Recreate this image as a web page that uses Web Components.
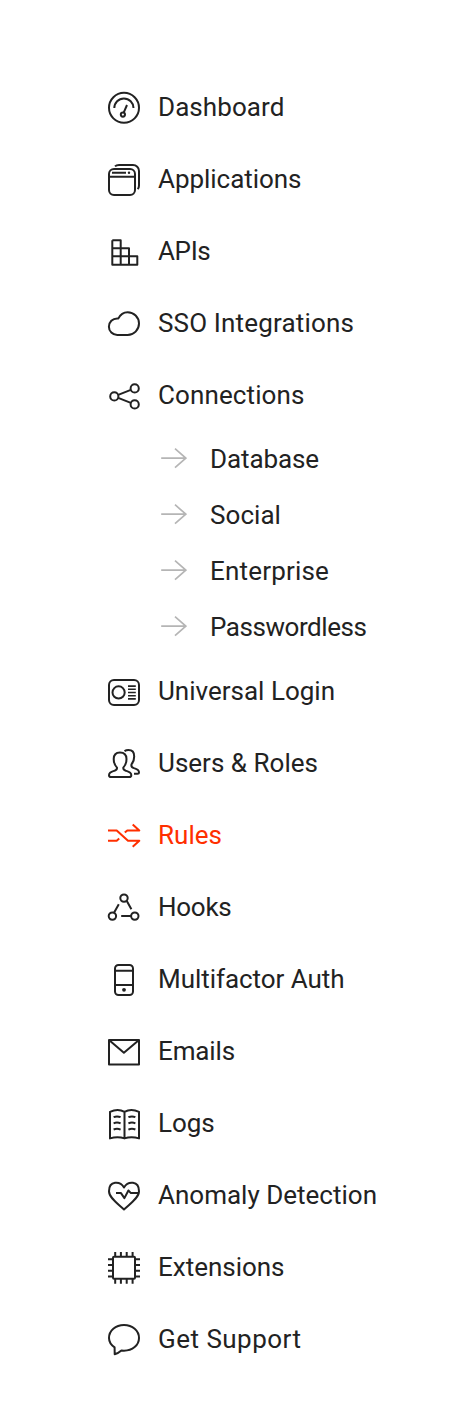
<!DOCTYPE html>
<html lang="en">
<head>
<meta charset="utf-8">
<title>Navigation</title>
<style>
html,body{margin:0;background:#fff}
body{font-family:Roboto,"Liberation Sans",sans-serif;font-size:26px;color:#222}
</style>
</head>
<body>
<side-nav>
<nav-item icon="dashboard" fit="126.500">Dashboard</nav-item>
<nav-item icon="apps" fit="143.5">Applications</nav-item>
<nav-item icon="apis" fit="52.4">APIs</nav-item>
<nav-item icon="cloud" fit="196">SSO Integrations</nav-item>
<nav-item icon="share" fit="146.5">Connections</nav-item>
<nav-sub fit="109">Database</nav-sub>
<nav-sub fit="71">Social</nav-sub>
<nav-sub fit="119">Enterprise</nav-sub>
<nav-sub fit="156.5">Passwordless</nav-sub>
<nav-item icon="login" fit="177">Universal Login</nav-item>
<nav-item icon="users" fit="160">Users &amp; Roles</nav-item>
<nav-item icon="rules" fit="64" active>Rules</nav-item>
<nav-item icon="hooks" fit="73.5">Hooks</nav-item>
<nav-item icon="phone" fit="186.5">Multifactor Auth</nav-item>
<nav-item icon="mail" fit="77">Emails</nav-item>
<nav-item icon="logs" fit="56.5">Logs</nav-item>
<nav-item icon="heart" fit="219">Anomaly Detection</nav-item>
<nav-item icon="chip" fit="126.500">Extensions</nav-item>
<nav-item icon="chat" fit="143.5">Get Support</nav-item>
</side-nav>
<script>
const dot = (x, y, r) => `<circle cx="${x}" cy="${y}" r="${r}" fill="currentColor" stroke="none"/>`;
const ICONS = {
  dashboard: `<circle cx="16" cy="15.8" r="15"/><path d="M6.3 16a9.6 9.6 0 0 1 19.2 0M15.8 20.4 19 13"/><circle cx="14.9" cy="22.6" r="2.1"/>`,
  apps: `<rect x="1" y="5" width="26" height="26" rx="5"/><path d="M1 12.8h26M4 8.8h14M7 2.4C8 1.4 9.3 1 11 1h14a6 6 0 0 1 6 6v14.5c0 1.6-.5 2.8-1.3 3.7"/>${dot(21, 8.8, 1.2)}`,
  apis: `<path d="M4.3 4.2h8.4v24.5M4.3 4.2v24.5h25v-8.4h-25M4.3 12.3H21v16.4"/>`,
  cloud: `<path d="M9.2 27a8.3 8.3 0 0 1 0-16.6h1.2C12.300 6.500 15.500 4.200 19.600 4.200a11.400 11.400 0 0 1 0 22.800Z"/>`,
  share: `<circle cx="6.3" cy="16.4" r="4.100"/><circle cx="26.7" cy="8.4" r="4.100"/><circle cx="26.7" cy="24.4" r="4.100"/><path d="m10.2 14.9 12.6-5M10.2 17.9l12.6 5"/>`,
  login: `<rect x="1" y="4" width="30" height="25" rx="5"/><circle cx="10.6" cy="16.4" r="6.1"/><path d="M20 10.1h7.8M20 13.3h7.8M20 16.5h7.8M20 19.7h7.8M20 22.9h7.8" stroke-width="1.6"/>`,
  users: `<path d="M12 4.4C8 4.4 5.7 7 5.7 11c0 3.6 1.2 6.4 3.3 8.6.2 1.6-.6 2.5-2.5 3.1C3.6 23.5 1 24 1 27.2 1 28.5 1.6 29 3 29h18.2c1.4 0 2.1-.5 2.1-1.8 0-3.2-2.6-3.7-5.5-4.5-1.9-.6-2.7-1.5-2.5-3.1 2.1-2.2 3.2-5 3.2-8.6 0-4-2.4-6.6-6.5-6.6Z"/><path d="M16.5 3.2c1.2-.8 2.500-1.100 4-1.100 3.600 0 5.700 2.400 5.700 6.300 0 3-.9 5.600-2.600 7.700-.7 2.100.1 3.200 2.400 4 2.800.8 5 1.600 5 4.200 0 1-.5 1.500-1.600 1.500H26"/>`,
  rules: `<path d="M0 10.4h8.7L20 20.8h11.3l-6.6 6M0 20.8h8.7l2.5-2.2M16.800 12.600l2.500-2.200h12l-6.600-6"/>`,
  hooks: `<circle cx="16" cy="6.1" r="3.7"/><circle cx="4.4" cy="24.1" r="3.7"/><circle cx="26.8" cy="24.1" r="3.7"/><path d="M10.8 12.2 6 20.700M18.800 9l4.600 8.200M13.200 24.100H23"/>`,
  phone: `<rect x="7" y="1" width="18" height="30" rx="3.5"/><path d="M7 6.8h18M7 21h18"/>${dot(16, 25.8, 1.9)}`,
  mail: `<path d="M1 4h30v24.600H1ZM1 4l14.900 12.700L31 4"/>`,
  logs: `<path d="M16.500 3.800C12.500 1.500 7 1.400 2 3.800v26.600c5-1.600 10-1.600 14.500 0 4.500-1.600 9.500-1.600 14.500 0V3.800c-5-2.400-10.500-2.300-14.500 0v26.600"/><path d="M5.600 9.100c2.400-1 4.800-.9 7 .1M5.600 15.300c2.400-1 4.800-.9 7 .1M5.600 21.500c2.400-1 4.800-.9 7 .1M20.400 9.200c2.200-1 4.600-1.100 7-.1M20.400 15.400c2.200-1 4.600-1.100 7-.1M20.400 21.600c2.200-1 4.600-1.100 7-.1"/>`,
  heart: `<path d="M16 7.400C12 .8 1 .6 1 11.200c0 6.500 8.600 12.200 15 18.200 6.400-6 15-11.700 15-18.200C31 .6 20 .8 16 7.400Z"/><path d="M8 13.100h5l3.400 5 4-7.600 2.500 2.600h8"/>`,
  chip: `<rect x="5" y="4.800" width="22" height="22" rx="1"/><path d="M7.200 0v5M12.900 0v5M18.700 0v5M24.600 0v5M7.200 27v4.800M12.900 27v4.800M18.700 27v4.800M24.600 27v4.800M0 7.200h5M0 12.900h5M0 18.700h5M0 24.500h5M27 7.200h5M27 12.900h5M27 18.700h5M27 24.500h5"/>`,
  chat: `<path d="M6.600 23.400C3 20.900 1 17.700 1 14 1 6.700 7.500 1 16 1s15 5.700 15 13-6.600 12.700-15 12.700c-.9 0-1.800 0-2.600-.1-2 1.800-4.200 3-6.700 3.700Z"/>`
};

/* Spreads a label's letters so that it takes the width given by its fit attribute. */
function fitLabel(host) {
  const label = host.shadowRoot.querySelector('.label');
  const natural = label.getBoundingClientRect().width;
  label.style.letterSpacing = (host.getAttribute('fit') - natural) / host.textContent.length + 'px';
}

customElements.define('side-nav', class extends HTMLElement {
  constructor() {
    super();
    this.attachShadow({ mode: 'open' }).innerHTML = `<style>
      :host{display:block;box-sizing:border-box;height:1420px;padding-top:72px;overflow:hidden}
      nav{display:flex;flex-direction:column}
    </style><nav><slot></slot></nav>`;
  }
});

customElements.define('nav-item', class extends HTMLElement {
  connectedCallback() {
    this.attachShadow({ mode: 'open' }).innerHTML = `<style>
      :host{display:flex;align-items:center;height:72px;padding-left:108px;gap:18px;white-space:nowrap}
      :host([active]){color:#ff2f00}
      svg{width:32px;height:32px;flex:none;overflow:visible}
      .label{line-height:36px;padding-bottom:2px}
    </style><svg viewBox="0 0 32 32" fill="none" stroke="currentColor" stroke-width="2" stroke-linejoin="round">${ICONS[this.getAttribute('icon')]}</svg><span class="label"><slot></slot></span>`;
    fitLabel(this);
  }
});

customElements.define('nav-sub', class extends HTMLElement {
  connectedCallback() {
    this.attachShadow({ mode: 'open' }).innerHTML = `<style>
      :host{display:flex;align-items:center;height:56px;padding-left:161px;gap:23px;white-space:nowrap}
      svg{width:26px;height:24px;flex:none;color:#b5b5b5}
      .label{line-height:36px;padding-bottom:2px}
    </style><svg viewBox="0 0 26 24" fill="none" stroke="currentColor" stroke-width="1.7"><path d="M.2 10.200h24.600M14 .7l10.800 9.500L14 19.700"/></svg><span class="label"><slot></slot></span>`;
    fitLabel(this);
  }
});
</script>
</body>
</html>
